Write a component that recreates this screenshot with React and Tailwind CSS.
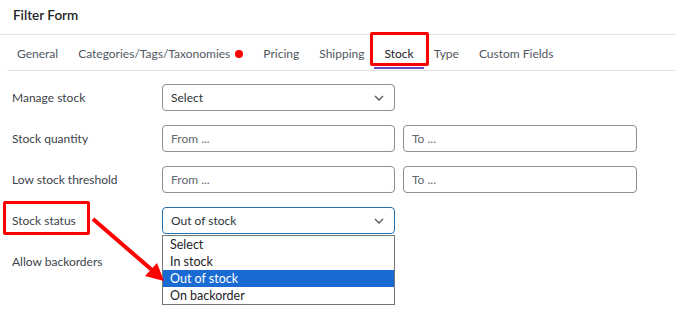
import React from 'react';

const tabs = ['General', 'Categories/Tags/Taxonomies', 'Pricing', 'Shipping', 'Stock', 'Type', 'Custom Fields'];

function Chevron() {
  return (
    <svg width="10" height="6" viewBox="0 0 10 6" className="text-[#50575e]">
      <path d="M1 1l4 4 4-4" fill="none" stroke="currentColor" strokeWidth="1.3" />
    </svg>
  );
}

function SelectBox({ value, focused }) {
  return (
    <div className={`w-[233px] h-[27px] rounded-[4px] border flex items-center justify-between pl-[8px] pr-[10px] text-[#2c3338] ${focused ? 'border-[#2271b1]' : 'border-[#8c8f94]'}`}>
      <span>{value}</span>
      <Chevron />
    </div>
  );
}

function TextBox({ placeholder, wide }) {
  return (
    <div className={`${wide ? 'w-[234px]' : 'w-[233px]'} h-[27px] rounded-[4px] border border-[#8c8f94] flex items-center pl-[8px] text-[#646970]`}>
      {placeholder}
    </div>
  );
}

export default function App() {
  return (
    <div className="w-[676px] h-[326px] bg-white relative overflow-hidden text-[12px] text-[#3c434a]" style={{ fontFamily: 'Lato, "Noto Sans", sans-serif' }}>
      {/* 标题 */}
      <div className="h-[35px] border-b border-[#e2e4e7] px-[13px] pb-[3px] flex items-center text-[13.5px] font-semibold text-[#1d2327]">
        Filter Form
      </div>

      {/* 选项卡 */}
      <div className="ml-[7px] h-[36px] border-b border-[#e2e4e7] flex items-stretch pt-[3px]">
        {tabs.map(t => (
          <div key={t} className={`relative flex items-center px-[10px] ${t === 'Stock' ? 'text-[#1d2327]' : 'text-[#50575e]'}`}>
            <span>{t}</span>
            {t === 'Categories/Tags/Taxonomies' && <span className="ml-[5px] w-[8px] h-[8px] rounded-full bg-[#ff0000]" />}
            {t === 'Stock' && <>
              <span className="absolute left-0 right-0 bottom-[1px] h-[2px] bg-[#6347cf]" />
              <span className="absolute -left-[4px] -right-[5px] -top-[6px] bottom-[4px] border-[3px] border-[#ff0000] rounded-[2px]" />
            </>}
          </div>
        ))}
      </div>

      {/* 表单 */}
      <div className="mt-[13px] flex flex-col gap-[14px] pl-[12px]">
        <div className="flex items-center h-[27px]">
          <div className="w-[150px]">Manage stock</div>
          <SelectBox value="Select" />
        </div>
        <div className="flex items-center h-[27px]">
          <div className="w-[150px]">Stock quantity</div>
          <div className="flex gap-[8px]">
            <TextBox placeholder="From ..." />
            <TextBox placeholder="To ..." wide />
          </div>
        </div>
        <div className="flex items-center h-[27px]">
          <div className="w-[150px]">Low stock threshold</div>
          <div className="flex gap-[8px]">
            <TextBox placeholder="From ..." />
            <TextBox placeholder="To ..." wide />
          </div>
        </div>
        <div className="flex items-center h-[27px]">
          <div className="w-[150px] relative">
            Stock status
            <span className="absolute -left-[9px] w-[87px] -top-[11px] h-[34px] border-[3px] border-[#ff0000] rounded-[2px]" />
          </div>
          <div className="relative">
            <SelectBox value="Out of stock" focused />
            <div className="absolute left-0 top-[28px] w-[233px] border border-[#767676] bg-white z-10 text-[#1d2327] text-[12.5px] leading-[17px]">
              <div className="px-[7px]">Select</div>
              <div className="px-[7px]">In stock</div>
              <div className="px-[7px] bg-[#1a6ad4] text-white">Out of stock</div>
              <div className="px-[7px]">On backorder</div>
            </div>
          </div>
        </div>
        <div className="flex items-center h-[27px]">
          <div className="w-[150px]">Allow backorders</div>
        </div>
      </div>

      {/* 红色箭头 */}
      <svg className="absolute left-0 top-0 z-20 pointer-events-none" width="676" height="326">
        <line x1="93" y1="219" x2="152" y2="270" stroke="#ff0000" strokeWidth="4" />
        <polygon points="164,281 145,276 157,263" fill="#ff0000" />
      </svg>
    </div>
  );
}
